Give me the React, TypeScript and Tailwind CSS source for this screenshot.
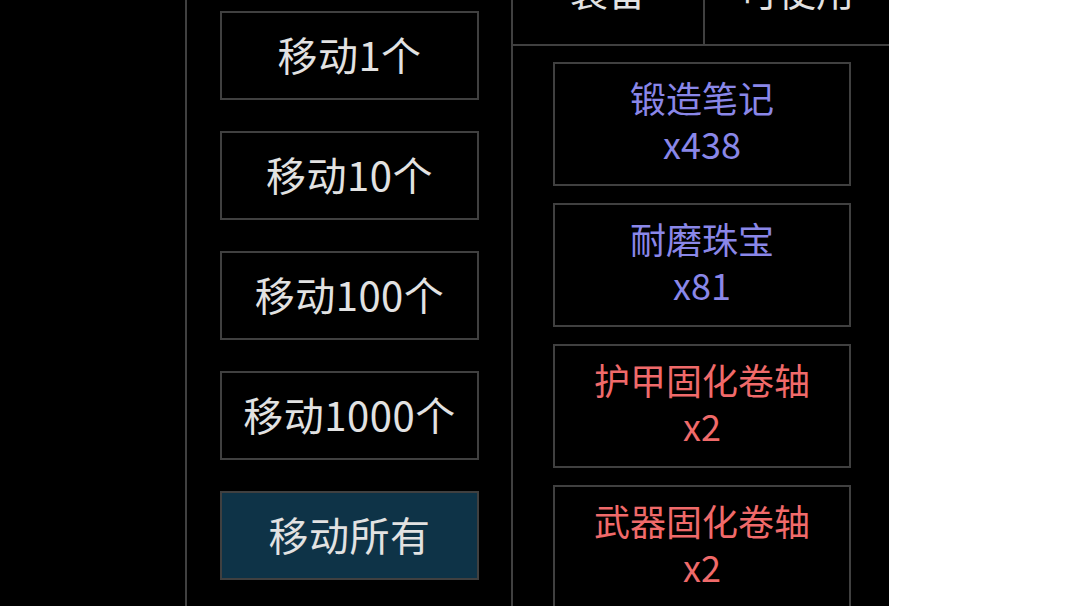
import React from 'react';

const moves = ['移动1个', '移动10个', '移动100个', '移动1000个', '移动所有'];

const items = [
    { name: '锻造笔记', count: 'x438', color: 'text-[#8a87e8]' },
    { name: '耐磨珠宝', count: 'x81', color: 'text-[#8a87e8]' },
    { name: '护甲固化卷轴', count: 'x2', color: 'text-[#f06a6a]' },
    { name: '武器固化卷轴', count: 'x2', color: 'text-[#f06a6a]' },
];

export default function App() {
    return (
        <div
            className="flex w-full h-[606px] bg-white overflow-hidden"
            style={{ fontFamily: '"Noto Sans CJK SC", "Noto Sans", sans-serif' }}
        >
            <div className="flex w-[889px] h-full bg-black shrink-0">
                {/* Left spacer */}
                <div className="w-[185px] shrink-0" />

                {/* Move buttons */}
                <div className="w-[328px] shrink-0 border-x-2 border-[#404040] flex flex-col gap-[31px] pt-[11px] pl-[33px]">
                    {moves.map((label, i) => (
                        <button
                            key={label}
                            className={`w-[259px] h-[89px] shrink-0 border-2 border-[#404040] flex items-center justify-center pb-[4px] text-[40px] leading-none tracking-[0.5px] text-[#e2e2e2] ${i === moves.length - 1 ? 'bg-[#0e3347]' : 'bg-black'}`}
                        >
                            {label}
                        </button>
                    ))}
                </div>

                {/* Inventory */}
                <div className="flex-1 flex flex-col">
                    <div className="h-[46px] shrink-0 flex border-b-2 border-[#404040] overflow-hidden">
                        <div className="w-[192px] shrink-0 border-r-2 border-[#404040] flex justify-center">
                            <span className="text-[38px] leading-[38px] text-[#e2e2e2] -mt-[29px]">装备</span>
                        </div>
                        <div className="flex-1 flex justify-center">
                            <span className="text-[38px] leading-[38px] text-[#e2e2e2] -mt-[29px]">可使用</span>
                        </div>
                    </div>
                    <div className="flex flex-col gap-[17px] pt-[16px] pl-[40px]">
                        {items.map((it) => (
                            <div
                                key={it.name}
                                className={`w-[298px] h-[124px] shrink-0 border-2 border-[#404040] flex flex-col items-center justify-center gap-[6px] pb-[8px] text-[36px] leading-[40px] ${it.color}`}
                            >
                                <span>{it.name}</span>
                                <span>{it.count}</span>
                            </div>
                        ))}
                    </div>
                </div>
            </div>
        </div>
    );
}
